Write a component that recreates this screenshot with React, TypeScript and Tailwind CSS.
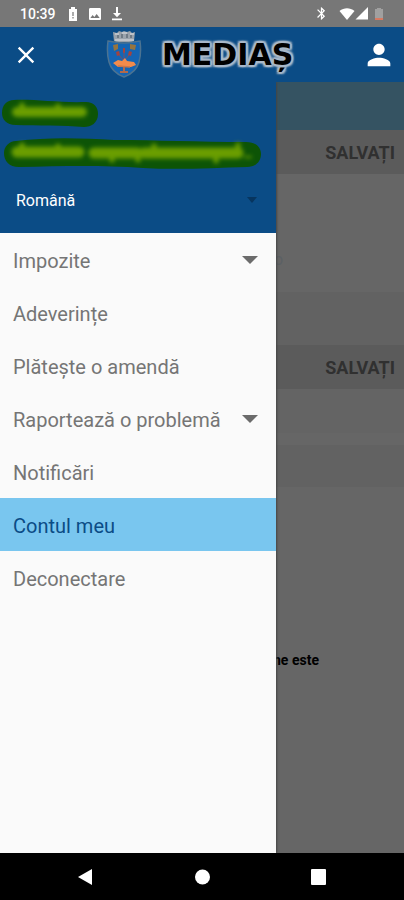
import { MdBluetooth, MdClose, MdImage, MdPerson } from "react-icons/md";

interface MenuItem {
  label: string;
  expandable?: boolean;
  active?: boolean;
}

const menuItems: MenuItem[] = [
  { label: "Impozite", expandable: true },
  { label: "Adeverințe" },
  { label: "Plătește o amendă" },
  { label: "Raportează o problemă", expandable: true },
  { label: "Notificări" },
  { label: "Contul meu", active: true },
  { label: "Deconectare" },
];

function StatusBar() {
  return (
    <div className="flex h-[27px] items-center justify-between bg-[#777777] px-5 text-white">
      <div className="flex items-center">
        <span className="w-12 text-sm font-medium">10:39</span>
        <svg className="h-4 w-[10px]" viewBox="0 0 10 16" fill="currentColor">
          <path d="M3 1h4v2h2v12H1V3h2z" />
          <path d="M4.4 6h1.2v4H4.4zM4.4 11h1.2v1.4H4.4z" fill="#777777" />
        </svg>
        <MdImage className="ml-[9px] h-4 w-4" />
        <svg className="ml-2 h-4 w-3" viewBox="0 0 12 16" fill="currentColor">
          <path d="M5 1h2v6h3l-4 4.2L2 7h3zM1 12.6h10v1.6H1z" />
        </svg>
      </div>
      <div className="flex items-center">
        <MdBluetooth className="h-[15px] w-[15px]" />
        <svg className="ml-[10px] h-4 w-4" viewBox="0 0 16 16" fill="currentColor">
          <path d="M0.5 5C5 1.2 11 1.2 15.500 5L8 14z" />
        </svg>
        <svg className="h-4 w-[14px]" viewBox="0 0 14 16" fill="currentColor">
          <path d="M13 1v12.500H0.500z" />
        </svg>
        <svg className="ml-[5px] h-4 w-[10px]" viewBox="0 0 10 16">
          <path d="M3 2h4v1h2v9H1V3h2z" fill="#a0a0a0" />
          <path d="M1 12h8v2H1z" fill="#d77a62" />
        </svg>
      </div>
    </div>
  );
}

function CoatOfArms() {
  return (
    <svg className="h-[50px] w-9" viewBox="0 0 36 50">
      <path d="M7 2l4 1 2-2 3 1 2-1 3 1 3-1 2 2 3-1-1 9-2 1H10l-2-1z" fill="#9aa3ac" />
      <path d="M11 5h2v3h-2zM15 4h2v4h-2zM20 4h2v4h-2zM24 5h2v3h-2z" fill="#6f7b86" />
      <path d="M9 4h4M16 3h5M24 4h4M9 10h19" stroke="#c9cdd1" strokeWidth="1.500" />
      <path
        d="M2 11l6 1q10 2 20 0l6-1c1 8 1 14-1 21-2 8-7 12-15 15C10 44 5 40 3 32 1 25 1 19 2 11z"
        fill="#1565b3"
        stroke="#4c7391"
        strokeWidth="1.500"
      />
      <path d="M7 15l5-1v5l-4 2zM24 14l6 1-1 5-5-1z" fill="#96743f" />
      <path d="M17 18h2v5h-2zM10 22l3-1 1 4-3 1zM23 21l3 1-1 4-3-1z" fill="#a4433f" />
      <path d="M13 25l4 5M18 22v8M23 25l-4 5" stroke="#74506a" strokeWidth="1" />
      <path d="M7 33l5-3 4 1 3-3 2 3 7 1 2 3-5 2H12z" fill="#f28b4b" />
      <path d="M12 36l12 1" stroke="#c9764a" strokeWidth="1.500" />
      <path d="M18 37v4M14 42h8" stroke="#b0694b" strokeWidth="2" />
    </svg>
  );
}

function Header() {
  return (
    <header className="flex h-[55px] items-center bg-[#0b4c86] px-3 text-white">
      <button type="button" aria-label="Închide" className="h-7 w-7">
        <MdClose className="h-7 w-7" />
      </button>
      <div className="flex flex-1 items-center gap-5 pl-[66px]">
        <CoatOfArms />
        <h1 className="font-['DejaVu_Sans',sans-serif] text-[30px] font-bold leading-10 text-black [text-shadow:2px_0_1px_#a9b9c9,-2px_0_1px_#a9b9c9,0_2px_1px_#a9b9c9,0_-2px_1px_#a9b9c9,2px_2px_2px_#a9b9c9,-2px_-2px_2px_#a9b9c9,2px_-2px_2px_#a9b9c9,-2px_2px_2px_#a9b9c9]">
          MEDIAȘ
        </h1>
      </div>
      <button type="button" aria-label="Cont">
        <MdPerson className="-mr-1 h-[34px] w-[34px]" />
      </button>
    </header>
  );
}

// Account name and e-mail are covered by a marker stroke
function HiddenAccount() {
  return (
    <svg className="block h-[94px] w-[276px]" viewBox="0 0 276 94" role="img" aria-label="Cont ascuns">
      <defs>
        <filter id="smudge" x="-10%" y="-50%" width="120%" height="200%">
          <feGaussianBlur stdDeviation="2" />
        </filter>
      </defs>
      <path
        d="M14 18c20-1 45 3 72 2 8 0 12 5 12 12 0 9-7 13-14 13-20-2-46-1-68-2C6 43 2 37 2 31c0-8 5-13 12-13z"
        fill="#0d5406"
      />
      <path
        d="M16 59c32-4 65-3 98-1 44 0 82 2 132 2 10 0 15 5 15 12 0 8-6 13-14 13-35 1-70 3-104 1-40-3-80-2-124-1-10 0-15-6-15-14 0-6 5-12 12-12z"
        fill="#0d5406"
      />
      <g fill="none" stroke="#6a9e00" strokeLinecap="round" filter="url(#smudge)">
        <path d="M17 30h65" strokeWidth="10" />
        <path d="M22 23v8M58 24v8" strokeWidth="5" />
        <path d="M17 70h62M94 71h42M144 71h94" strokeWidth="11" />
        <path d="M22 63v8M58 64v8M112 73v5M138 68v10M154 64v6M216 72v7M238 63v8" strokeWidth="5" />
        <path d="M245 75h6" strokeWidth="2" />
      </g>
    </svg>
  );
}

function Drawer() {
  return (
    <aside className="absolute inset-y-0 left-0 flex w-[276px] flex-col bg-[#fafafa] shadow-[1px_0_2px_#444444]">
      <div className="h-[151px] bg-[#0b4c86]">
        <HiddenAccount />
        <div className="relative px-4">
          <select
            aria-label="Limba"
            className="block h-12 w-full appearance-none bg-transparent pt-px text-base text-white"
          >
            <option>Română</option>
          </select>
          <svg
            className="pointer-events-none absolute right-[19px] top-[21px] h-[6px] w-[10px]"
            viewBox="0 0 10 6"
            fill="#07355f"
          >
            <path d="M0 0h10L5 6z" />
          </svg>
        </div>
      </div>
      <nav>
        {menuItems.map((item) => (
          <a
            key={item.label}
            href="#"
            className={`flex h-[53px] items-center justify-between pl-[13px] pr-[18px] pt-0.5 text-xl ${
              item.active ? "bg-[#79c6ef] text-[#0b4c86]" : "text-[#757575]"
            }`}
          >
            {item.label}
            {item.expandable && (
              <svg className="mb-0.5 h-2 w-4" viewBox="0 0 16 8" fill="#6b6b6b">
                <path d="M0 0h16L8 8z" />
              </svg>
            )}
          </a>
        ))}
      </nav>
    </aside>
  );
}

function SaveRow() {
  return (
    <div className="flex h-11 items-center justify-end bg-[#5b5b5b] pr-[9px] pt-0.5">
      <button type="button" className="text-lg font-bold text-[#303030]">
        SALVAȚI
      </button>
    </div>
  );
}

function AccountPage() {
  return (
    <main className="flex flex-1 flex-col bg-[#666666]">
      <div className="h-12 bg-[#355362]" />
      <SaveRow />
      <div className="h-[118px] pt-[74px] pl-[274px] text-base text-[#5b6064]">o</div>
      <div className="h-[53px] bg-[#626262]" />
      <SaveRow />
      <div className="h-11 bg-[#646464]" />
      <div className="mt-3 h-[42px] bg-[#626262]" />
      <p className="mt-[163px] pl-[273px] text-sm font-bold text-black">ne este</p>
    </main>
  );
}

function NavigationBar() {
  return (
    <div className="flex h-[47px] items-center justify-around bg-black px-7 text-white">
      <button type="button" aria-label="Înapoi">
        <svg className="h-4 w-4" viewBox="0 0 16 16" fill="currentColor">
          <path d="M0 8L14 0v16z" />
        </svg>
      </button>
      <button type="button" aria-label="Acasă">
        <svg className="h-4 w-4" viewBox="0 0 16 16" fill="currentColor">
          <circle cx="8.500" cy="8" r="7.500" />
        </svg>
      </button>
      <button type="button" aria-label="Recente">
        <svg className="h-4 w-4" viewBox="0 0 16 16" fill="currentColor">
          <rect x="1" width="15" height="16" rx="1" />
        </svg>
      </button>
    </div>
  );
}

export default function App() {
  return (
    <div className="flex min-h-screen flex-col font-['Roboto',sans-serif]">
      <StatusBar />
      <Header />
      <div className="relative flex flex-1 flex-col overflow-hidden">
        <AccountPage />
        <Drawer />
      </div>
      <NavigationBar />
    </div>
  );
}
